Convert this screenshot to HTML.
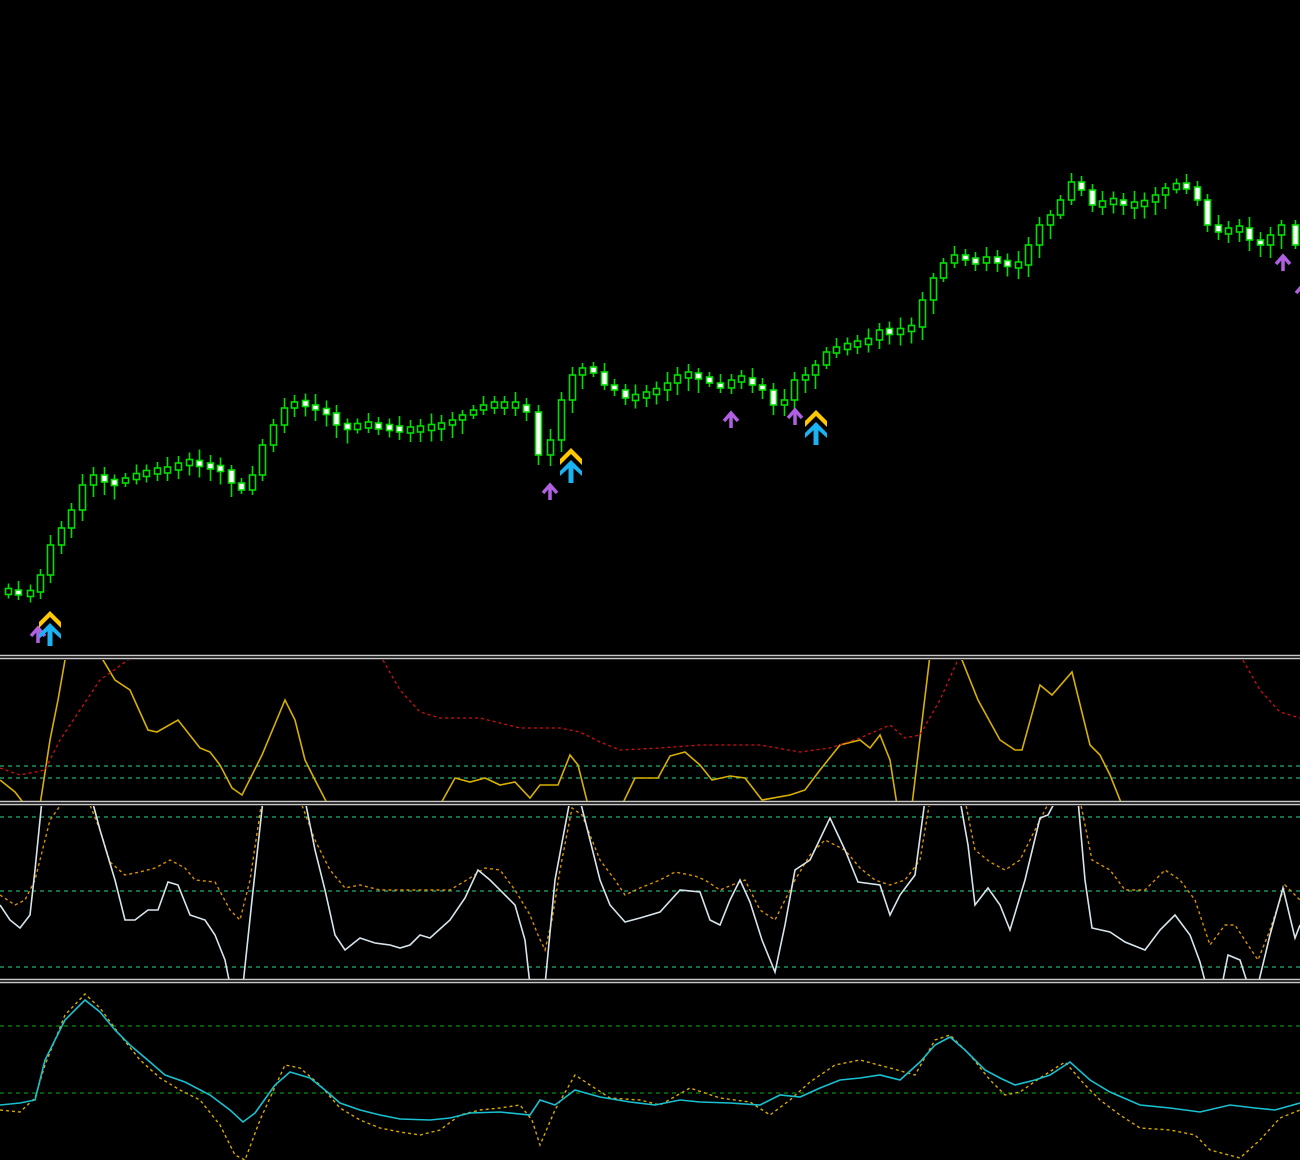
<!DOCTYPE html>
<html><head><meta charset="utf-8"><style>
html,body{margin:0;padding:0;background:#000;width:1300px;height:1160px;overflow:hidden}
svg{display:block}
</style></head><body>
<svg id="s" width="1300" height="1160" viewBox="0 0 1300 1160" xmlns="http://www.w3.org/2000/svg">
<rect width="1300" height="1160" fill="#000"/>
<g id="candles"></g>
<defs>
<g id="purp"><path d="M-7,3 L0,-5 L7,3" fill="none" stroke="#b060e0" stroke-width="3.5"/><path d="M0,-4 V10" stroke="#b060e0" stroke-width="3.5"/></g>
<g id="big"><path d="M-11,0 L0,-11 L11,0 L11,6 L0,-5 L-11,6Z" fill="#ffc800"/><path d="M-11,12 L0,1 L11,12 L11,17 L0,7 L-11,17Z" fill="#1ab2f0"/><rect x="-2.5" y="6" width="5" height="18" fill="#1ab2f0"/></g>
</defs>
<use href="#purp" x="38" y="633"/>
<use href="#big" x="50" y="622"/>
<use href="#big" x="571" y="459"/>
<use href="#purp" x="550" y="490"/>
<use href="#purp" x="731" y="418"/>
<use href="#purp" x="795" y="415"/>
<use href="#big" x="816" y="421"/>
<use href="#purp" x="1283" y="261"/>
<use href="#purp" x="1303" y="290"/>

<g stroke="#c8c8c8" stroke-width="1.5">
<line x1="0" y1="655.5" x2="1300" y2="655.5"/><line x1="0" y1="658.5" x2="1300" y2="658.5"/>
<line x1="0" y1="801.5" x2="1300" y2="801.5"/><line x1="0" y1="804.5" x2="1300" y2="804.5"/>
<line x1="0" y1="979.5" x2="1300" y2="979.5"/><line x1="0" y1="982.5" x2="1300" y2="982.5"/>
</g>
<g stroke="#20b070" stroke-width="1.2" stroke-dasharray="4,4">
<line x1="0" y1="766" x2="1300" y2="766"/><line x1="0" y1="778" x2="1300" y2="778"/>
<line x1="0" y1="817" x2="1300" y2="817"/><line x1="0" y1="891" x2="1300" y2="891"/><line x1="0" y1="967" x2="1300" y2="967"/>
</g>
<g stroke="#089008" stroke-width="1.2" stroke-dasharray="4,4">
<line x1="0" y1="1026" x2="1300" y2="1026"/><line x1="0" y1="1093" x2="1300" y2="1093"/>
</g>

<svg x="0" y="660" width="1300" height="141" viewBox="0 660 1300 141" overflow="hidden">
<g fill="none" stroke="#d8b000" stroke-width="1.6">
<polyline points="0,780 15,792 25,805"/>
<polyline points="40,805 50,740 58,700 65,660 68,650"/>
<polyline points="100,650 103,660 115,680 130,690 148,730 157,732 178,720 200,748 210,752 220,765 232,788 242,795 262,755 285,700 295,720 305,760 315,780 328,805"/>
<polyline points="440,805 455,778 470,782 485,778 500,785 515,782 530,798 540,785 558,785 570,755 578,765 588,805"/>
<polyline points="622,805 635,778 658,778 670,756 685,752 700,765 712,780 730,776 745,778 762,800 790,795 805,790 820,770 840,745 860,740 870,748 880,735 890,760 897,805"/>
<polyline points="912,805 930,655"/>
<polyline points="960,655 978,700 1000,740 1015,750 1022,750 1040,685 1052,695 1072,672 1090,745 1100,755 1110,775 1122,805"/>
</g>
<g fill="none" stroke="#d01010" stroke-width="1.3" stroke-dasharray="3,3">
<polyline points="0,768 20,775 45,770 60,740 80,710 100,680 135,655"/>
<polyline points="380,655 400,690 420,712 440,718 480,718 520,728 560,728 580,732 600,742 620,750 660,748 700,745 760,745 800,752 830,748 860,738 890,725 905,738 920,735 940,700 960,655"/>
<polyline points="1240,655 1260,690 1280,712 1300,718"/>
</g>
</svg>

<svg x="0" y="806" width="1300" height="173" viewBox="0 806 1300 173" overflow="hidden">
<g fill="none" stroke="#d89000" stroke-width="1.4" stroke-dasharray="3,3">
<polyline points="0,895 15,905 25,900 35,880 50,820 60,806 62,800"/>
<polyline points="88,800 100,830 110,862 125,875 140,872 155,868 170,860 185,868 195,880 215,882 230,910 240,920 250,880 262,800"/>
<polyline points="300,800 315,840 330,870 345,888 360,885 380,890 450,890 470,878 485,868 500,870 515,890 530,915 538,935 545,950 552,920 560,870 572,808 582,815 600,860 615,880 625,895 640,888 660,880 675,872 695,876 705,880 720,890 732,885 745,880 760,910 775,920 785,900 795,880 810,855 825,840 845,850 860,868 875,880 890,885 905,880 920,860 930,800"/>
<polyline points="965,800 975,850 990,862 1005,870 1020,860 1035,830 1050,800"/>
<polyline points="1080,800 1092,860 1110,870 1125,890 1145,890 1165,870 1180,880 1195,900 1210,945 1225,925 1235,925 1248,945 1258,960 1270,930 1285,885 1300,900"/>
</g>
<g fill="none" stroke="#d8e4ec" stroke-width="1.6">
<polyline points="0,905 10,920 20,928 30,915 35,870 42,800"/>
<polyline points="92,800 100,830 115,880 125,920 135,920 148,910 158,910 168,882 178,885 190,915 205,920 215,935 225,960 230,985"/>
<polyline points="243,985 252,900 263,800"/>
<polyline points="305,800 315,850 325,890 335,935 345,950 360,938 375,943 390,945 400,948 410,945 420,935 430,938 450,920 465,898 478,870 490,880 505,895 515,905 525,940 530,985"/>
<polyline points="545,985 555,880 570,800 580,800 590,840 600,880 610,905 625,922 640,918 660,912 680,890 700,892 710,920 720,925 730,900 740,880 750,902 762,940 775,972 785,925 795,870 810,860 830,818 845,850 858,882 880,885 890,915 900,895 915,875 925,800"/>
<polyline points="960,800 968,845 975,905 988,888 1000,905 1010,930 1025,880 1040,818 1048,815 1056,800"/>
<polyline points="1078,800 1085,880 1092,928 1110,932 1125,942 1145,950 1160,930 1175,915 1190,935 1200,962 1206,985"/>
<polyline points="1222,985 1228,955 1240,960 1248,985"/>
<polyline points="1258,985 1270,935 1283,888 1295,938 1300,925"/>
</g>
</svg>

<g fill="none" stroke="#d8a800" stroke-width="1.4" stroke-dasharray="3,3">
<polyline points="0,1110 20,1112 35,1098 45,1065 65,1015 85,994 100,1008 120,1035 140,1060 160,1078 180,1090 200,1100 220,1125 235,1155 245,1160 260,1120 285,1065 300,1068 320,1085 340,1108 360,1120 380,1128 400,1132 420,1135 440,1130 460,1115 480,1110 500,1108 520,1105 532,1120 540,1145 555,1110 575,1075 590,1085 610,1098 640,1100 660,1105 690,1088 720,1098 750,1102 770,1115 790,1100 810,1082 835,1065 860,1060 890,1068 915,1075 935,1040 950,1035 970,1055 990,1080 1005,1095 1020,1092 1040,1078 1065,1062 1085,1085 1100,1100 1120,1115 1140,1128 1170,1130 1195,1135 1210,1150 1240,1158 1260,1140 1280,1118 1300,1110"/>
</g>
<g fill="none" stroke="#18c0d0" stroke-width="1.6">
<polyline points="0,1105 20,1103 35,1100 45,1060 65,1020 85,1000 100,1012 115,1030 130,1045 150,1062 165,1075 185,1082 210,1095 230,1110 243,1122 255,1113 275,1085 290,1072 310,1078 325,1090 340,1103 360,1110 380,1115 400,1119 430,1120 450,1118 470,1113 500,1112 530,1115 540,1100 555,1105 575,1090 600,1097 630,1102 655,1105 680,1100 700,1102 730,1103 760,1105 780,1095 800,1097 820,1088 840,1080 860,1078 880,1075 900,1080 920,1062 935,1045 950,1037 965,1050 985,1070 1000,1078 1015,1085 1035,1080 1050,1075 1070,1062 1090,1080 1110,1092 1140,1105 1170,1108 1200,1112 1230,1105 1255,1108 1275,1110 1300,1103"/>
</g>
</svg>
<script>
(function(){
var c=[[8,590],[18,595],[30,592],[40,575],[50,545],[61,528],[71,510],[82,485],[93,475],[104,482],[114,483],[125,478],[136,475],[146,472],[157,470],[167,470],[178,463],[189,462],[199,465],[210,467],[220,470],[231,483],[241,490],[252,475],[262,445],[273,425],[284,408],[294,402],[305,405],[315,410],[326,413],[336,425],[347,428],[357,425],[368,425],[378,427],[389,428],[399,430],[410,430],[420,428],[431,427],[441,425],[452,420],[462,415],[473,410],[483,405],[494,405],[504,405],[515,405],[526,412],[538,455],[550,440],[561,400],[572,375],[582,368],[593,372],[604,385],[614,390],[625,398],[635,397],[646,393],[656,390],[667,383],[677,375],[688,375],[698,377],[709,383],[720,388],[731,380],[741,378],[752,385],[762,390],[773,405],[784,400],[794,380],[805,375],[815,365],[826,352],[836,348],[847,345],[857,343],[868,340],[879,330],[889,333],[900,330],[911,327],[922,300],[933,278],[943,263],[954,255],[965,260],[975,262],[986,258],[997,262],[1007,265],[1018,265],[1028,245],[1039,225],[1050,215],[1060,200],[1071,182],[1081,190],[1092,205],[1102,203],[1113,200],[1123,205],[1134,205],[1144,202],[1155,195],[1165,188],[1176,185],[1186,187],[1197,200],[1207,225],[1218,232],[1228,230],[1239,228],[1249,240],[1260,245],[1270,235],[1281,225],[1295,245]];
var NS="http://www.w3.org/2000/svg",g=document.getElementById('candles');
function el(n,a){var e=document.createElementNS(NS,n);for(var k in a)e.setAttribute(k,String(a[k]));g.appendChild(e);}
for(var i=0;i<c.length;i++){
 var x=c[i][0],cl=c[i][1],op=(i>0)?c[i-1][1]:cl+3;
 var top=Math.min(op,cl),bot=Math.max(op,cl);
 if(bot-top<5){var m=(top+bot)/2;top=m-3;bot=m+3;}
 var r=(i*37)%11;
 var w1=top-5-(r%7),w2=bot+4+((r*3)%11);
 el('line',{x1:x+0.5,y1:w1,x2:x+0.5,y2:w2,stroke:'#00e000','stroke-width':1.6});
 el('rect',{x:x-2.5,y:top,width:6,height:bot-top,fill:(cl>op?'#ffffff':'#000000'),stroke:'#00e000','stroke-width':1.6});
}
})();
</script>
</body></html>
